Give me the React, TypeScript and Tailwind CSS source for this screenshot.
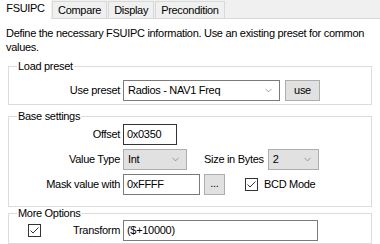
import { ChevronDown } from "lucide-react";

// FSUIPC config panel: tab strip + three group boxes.

function Select({ value, className }: { value: string; className: string }) {
  return (
    <div className={`flex items-center justify-between border pl-[4px] pr-[5px] ${className}`}>
      <span>{value}</span>
      <ChevronDown className="h-[11px] w-[11px] text-[#606060]" strokeWidth={1.25} />
    </div>
  );
}

function Check() {
  return (
    <div className="flex h-[13px] w-[13px] items-center justify-center border border-[#333] bg-white">
      <svg viewBox="0 0 11 11" className="h-[11px] w-[11px]">
        <path d="M1.5 5.5 L4 8 L9.5 2.5" fill="none" stroke="#333" strokeWidth="1" />
      </svg>
    </div>
  );
}

function Group({ title, children, className }: { title: string; children: React.ReactNode; className?: string }) {
  return (
    <fieldset className={`mx-2 border border-[#dcdcdc] ${className ?? ""}`}>
      <legend className="ml-[8px] px-[1px] leading-[13px]">{title}</legend>
      {children}
    </fieldset>
  );
}

export default function App() {
  const tabs = ["Compare", "Display", "Precondition"];
  return (
    <div className="h-[244px] w-[380px] overflow-hidden bg-white text-[11px] tracking-[-0.3px] text-black" style={{ fontFamily: '"Liberation Sans", Arial, sans-serif' }}>
      <div className="flex h-[19px] items-end border-b border-[#d9d9d9] bg-[#f0f0f0]">
        <div className="-mb-px flex h-[19px] w-[51px] items-center justify-center bg-white pb-[3px]">FSUIPC</div>
        {tabs.map((t) => (
          <div key={t} className="ml-[1px] flex h-[17px] items-center border border-b-0 border-[#d9d9d9] bg-[#f0f0f0] px-[5px]">
            {t}
          </div>
        ))}
      </div>

      <p className="px-[6px] pt-[7px] leading-[14px]">
        Define the necessary FSUIPC information. Use an existing preset for common values.
      </p>

      <Group title="Load preset" className="mt-[6px] h-[45px]">
        <div className="flex items-center pt-[7px]">
          <span className="w-[111px] text-right">Use preset</span>
          <Select value="Radios - NAV1 Freq" className="ml-[3px] h-[21px] w-[157px] border-[#7a7a7a] bg-white" />
          <div className="ml-[5px] flex h-[21px] w-[35px] items-center justify-center border border-[#adadad] bg-[#e1e1e1]">use</div>
        </div>
      </Group>

      <Group title="Base settings" className="mt-[5px] h-[97px]">
        <div className="flex flex-col gap-[4px] pt-[1px]">
          <div className="flex items-center">
            <span className="w-[111px] text-right">Offset</span>
            <div className="ml-[3px] flex h-[21px] w-[54px] items-center border border-[#333] pl-[3px]">0x0350</div>
          </div>
          <div className="flex items-center">
            <span className="w-[111px] text-right">Value Type</span>
            <Select value="Int" className="ml-[3px] h-[21px] w-[64px] border-[#adadad] bg-[#e1e1e1]" />
            <span className="ml-[17px]">Size in Bytes</span>
            <Select value="2" className="ml-[4px] h-[21px] w-[51px] border-[#adadad] bg-[#e1e1e1]" />
          </div>
          <div className="flex items-center">
            <span className="w-[111px] text-right">Mask value with</span>
            <div className="ml-[3px] flex h-[21px] w-[77px] items-center border border-[#7a7a7a] pl-[3px]">0xFFFF</div>
            <div className="ml-[4px] flex h-[21px] w-[21px] items-center justify-center border border-[#adadad] bg-[#e1e1e1] pb-[3px]">...</div>
            <div className="ml-[20px]"><Check /></div>
            <span className="ml-[6px]">BCD Mode</span>
          </div>
        </div>
      </Group>

      <Group title="More Options" className="h-[37px]">
        <div className="flex items-center">
          <div className="ml-[19px]"><Check /></div>
          <span className="w-[79px] text-right">Transform</span>
          <div className="ml-[3px] flex h-[21px] w-[195px] items-center border border-[#7a7a7a] pl-[3px]">($+10000)</div>
        </div>
      </Group>
    </div>
  );
}
